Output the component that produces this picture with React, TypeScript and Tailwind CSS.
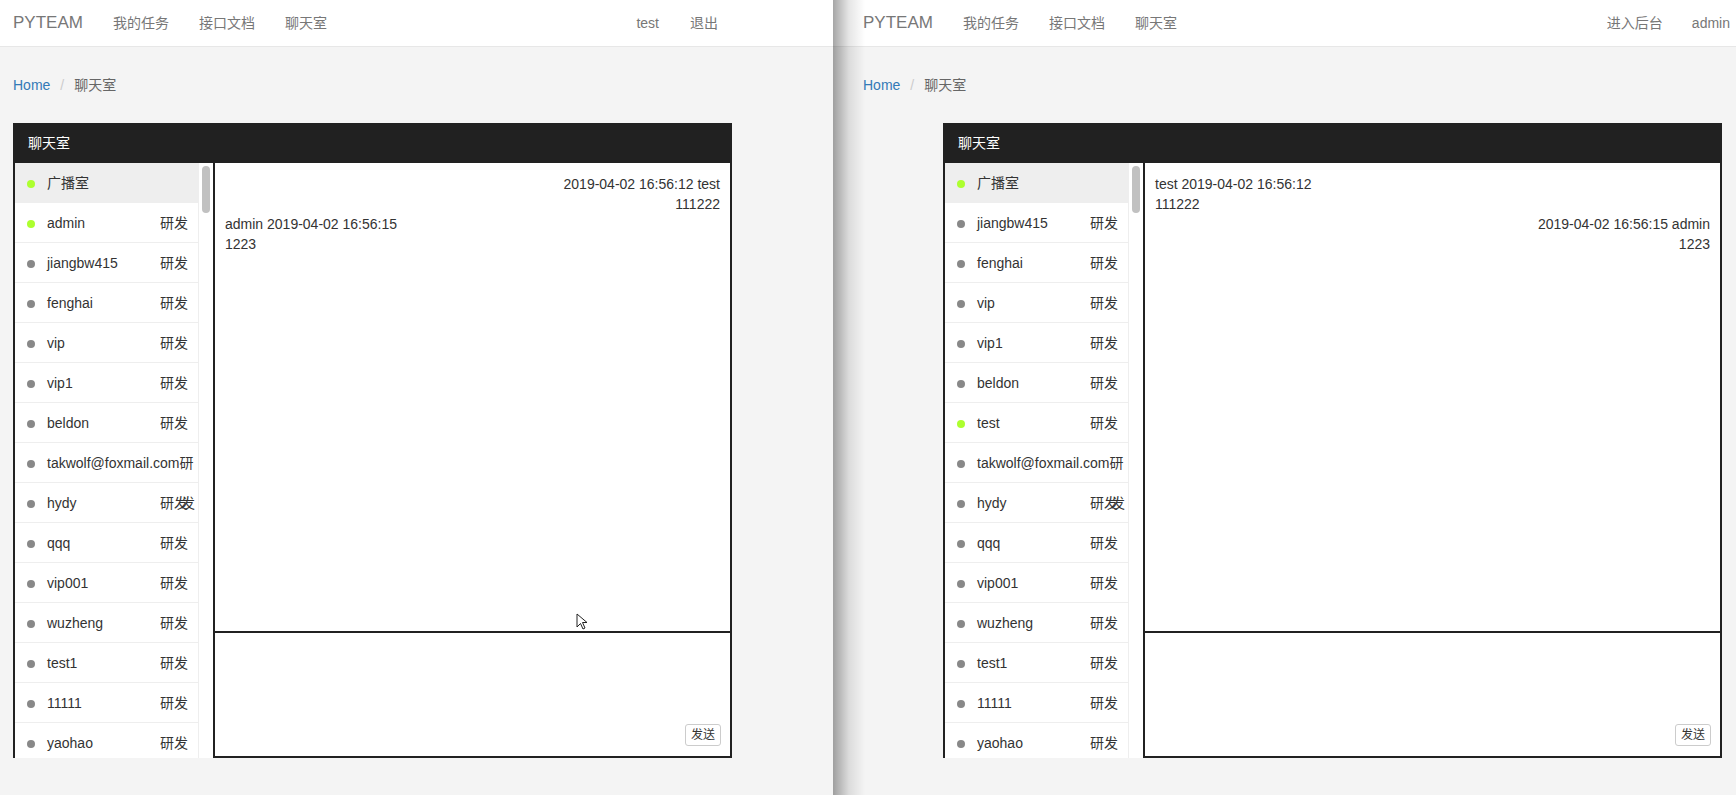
import React from "react";

type User = { name: string; online?: boolean; active?: boolean; dept?: "normal" | "cut" | "dup" | "none" };

const FONT = '"Liberation Sans", "Noto Sans CJK SC", sans-serif';

function Dept({ kind }: { kind?: User["dept"] }) {
  if (kind === "none") return null;
  if (kind === "cut") return <span>研</span>;
  if (kind === "dup")
    return (
      <span className="flex">
        <span>研发</span>
        <span className="-ml-[7px]">发</span>
      </span>
    );
  return <span>研发</span>;
}

function UserRow({ u }: { u: User }) {
  return (
    <div
      className={`flex h-[40px] shrink-0 items-center overflow-hidden whitespace-nowrap border-b border-[#eeeeee] pt-[2px] text-[14px] text-[#333] ${
        u.active ? "bg-[#eeeeee]" : "bg-white"
      }`}
    >
      <span
        className={`ml-[12px] h-[8px] w-[8px] shrink-0 rounded-full ${
          u.online ? "bg-[#adff2f]" : "bg-[#888888]"
        }`}
      />
      <span className="ml-[12px] min-w-[113px] shrink-0">{u.name}</span>
      <Dept kind={u.dept} />
    </div>
  );
}

type Msg = { head: string; body: string; right?: boolean };

function ChatPanel({ users, msgs, width }: { users: User[]; msgs: Msg[]; width: string }) {
  return (
    <div className={`${width} shrink-0`}>
      <div className="flex h-[40px] items-center bg-[#212121] pl-[15px] text-[14px] text-white">聊天室</div>
      <div className="flex h-[595px]">
        <div className="flex h-full border-l-2 border-[#212121] bg-white">
          <div className="flex h-full w-[184px] flex-col overflow-hidden border-r border-[#eeeeee]">
            {users.map((u, i) => (
              <UserRow key={i} u={u} />
            ))}
          </div>
          <div className="flex w-[14px] justify-center pt-[3px]">
            <div className="h-[47px] w-[8px] rounded-full bg-[#c1c1c1]" />
          </div>
        </div>
        <div className="flex min-w-0 flex-1 flex-col border-x-2 border-b-2 border-[#212121] bg-white">
          <div className="flex-1 px-[10px] pt-[11px] text-[14px] leading-[20px] text-[#333]">
            {msgs.map((m, i) => (
              <div key={i} className={m.right ? "text-right" : "text-left"}>
                <div>{m.head}</div>
                <div>{m.body}</div>
              </div>
            ))}
          </div>
          <div className="flex h-[125px] items-end justify-end border-t-2 border-[#212121] pb-[10px] pr-[9px]">
            <button className="h-[22px] rounded-[3px] border border-[#cccccc] bg-white px-[5px] text-[12px] leading-[20px] text-[#333]">
              发送
            </button>
          </div>
        </div>
      </div>
    </div>
  );
}

const common: User[] = [
  { name: "jiangbw415" },
  { name: "fenghai" },
  { name: "vip" },
  { name: "vip1" },
  { name: "beldon" },
];
const tail: User[] = [
  { name: "takwolf@foxmail.com", dept: "cut" },
  { name: "hydy", dept: "dup" },
  { name: "qqq" },
  { name: "vip001" },
  { name: "wuzheng" },
  { name: "test1" },
  { name: "11111" },
  { name: "yaohao" },
];

const leftUsers: User[] = [
  { name: "广播室", online: true, active: true, dept: "none" },
  { name: "admin", online: true },
  ...common,
  ...tail,
];
const rightUsers: User[] = [
  { name: "广播室", online: true, active: true, dept: "none" },
  ...common,
  { name: "test", online: true },
  ...tail,
];

function Navbar({
  left,
  right,
  pl,
  pr,
  gapRight,
}: {
  left: string[];
  right: string[];
  pl: string;
  pr: string;
  gapRight: string;
}) {
  return (
    <nav className={`flex h-[47px] shrink-0 items-center border-b border-[#e7e7e7] bg-white text-[#777] ${pl} ${pr}`}>
      <span className="text-[17px] leading-[20px]">PYTEAM</span>
      {left.map((t) => (
        <span key={t} className="ml-[30px] text-[14px] leading-[20px]">
          {t}
        </span>
      ))}
      <div className={`ml-auto flex ${gapRight} text-[14px] leading-[20px]`}>
        {right.map((t) => (
          <span key={t}>{t}</span>
        ))}
      </div>
    </nav>
  );
}

function Breadcrumb({ pl }: { pl: string }) {
  return (
    <div className={`mt-[28px] flex h-[20px] items-center text-[14px] leading-[20px] ${pl}`}>
      <span className="text-[#337ab7]">Home</span>
      <span className="mx-[10px] text-[#cccccc]">/</span>
      <span className="text-[#666]">聊天室</span>
    </div>
  );
}

export default function App() {
  return (
    <div className="flex h-[795px] w-[1736px] overflow-hidden bg-[#f4f4f4]" style={{ fontFamily: FONT }}>
      {/* left window */}
      <div className="relative flex h-full w-[833px] shrink-0 flex-col">
        <Navbar
          left={["我的任务", "接口文档", "聊天室"]}
          right={["test", "退出"]}
          pl="pl-[13px]"
          pr="pr-[115px]"
          gapRight="gap-[31px]"
        />
        <Breadcrumb pl="pl-[13px]" />
        <div className="mt-[28px] pl-[13px]">
          <ChatPanel
            width="w-[719px]"
            users={leftUsers}
            msgs={[
              { head: "2019-04-02 16:56:12 test", body: "111222", right: true },
              { head: "admin 2019-04-02 16:56:15", body: "1223" },
            ]}
          />
        </div>
        <svg className="absolute left-[576px] top-[613px]" width="13" height="18" viewBox="0 0 13 18">
          <path d="M1 1 L1 14 L4.5 10.5 L7 16 L9 15 L6.5 9.5 L11 9.5 Z" fill="#fff" stroke="#222" strokeWidth="1" />
        </svg>
      </div>
      {/* right window */}
      <div className="relative flex h-full flex-1 flex-col">
        <Navbar
          left={["我的任务", "接口文档", "聊天室"]}
          right={["进入后台", "admin"]}
          pl="pl-[30px]"
          pr="pr-[6px]"
          gapRight="gap-[29px]"
        />
        <Breadcrumb pl="pl-[30px]" />
        <div className="mt-[28px] pl-[110px]">
          <ChatPanel
            width="w-[779px]"
            users={rightUsers}
            msgs={[
              { head: "test 2019-04-02 16:56:12", body: "111222" },
              { head: "2019-04-02 16:56:15 admin", body: "1223", right: true },
            ]}
          />
        </div>
        <div className="pointer-events-none absolute left-0 top-0 h-full w-[32px] bg-linear-to-r from-black/35 via-black/10 to-transparent" />
      </div>
    </div>
  );
}
